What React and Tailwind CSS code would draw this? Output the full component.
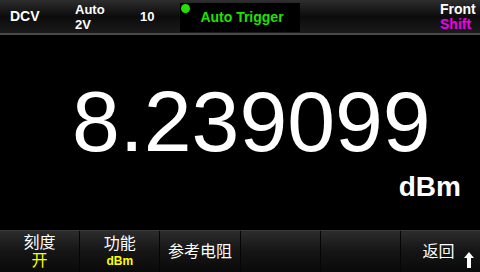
import React from "react";

const font = { fontFamily: '"Liberation Sans", Arial, "Noto Sans CJK SC", sans-serif' };

function SoftKey({ top, bottom, children, last }) {
  return (
    <div
      className={`relative flex-1 flex flex-col items-center justify-center bg-gradient-to-b from-[#2c2c2c] via-[#151515] to-[#0a0a0a] ${
        last ? "" : "border-r border-[#050505]"
      }`}
    >
      {top && <div className="text-white text-[16px] leading-[18px]">{top}</div>}
      {bottom}
      {children}
    </div>
  );
}

export default function App() {
  return (
    <div className="w-[480px] h-[272px] bg-black flex flex-col overflow-hidden" style={font}>
      {/* status bar */}
      <div className="h-[35px] flex items-stretch bg-gradient-to-b from-[#2e2e2e] via-[#0c0c0c] to-[#1a1a1a] border-b-2 border-[#4a4a4a]">
        <div className="w-[70px] flex items-center pl-[10px] text-white font-bold text-[14px]">DCV</div>
        <div className="w-[66px] flex flex-col justify-center pl-[5px] text-white font-bold text-[13px] leading-[15px]">
          <span>Auto</span>
          <span>2V</span>
        </div>
        <div className="w-[44px] flex items-center pl-[4px] text-white font-bold text-[13px]">10</div>
        <div className="relative w-[120px] my-[3px] mb-[1px] bg-black flex items-center justify-center">
          <span className="absolute left-[1px] top-[1px] w-[9px] h-[9px] rounded-full bg-[#22e000]" />
          <span className="text-[#22e000] font-bold text-[14px] pl-[4px]">Auto Trigger</span>
        </div>
        <div className="flex-1" />
        <div className="w-[40px] flex flex-col justify-center items-start text-[14px] font-bold leading-[15px]">
          <span className="text-white">Front</span>
          <span className="text-[#f000f0]">Shift</span>
        </div>
      </div>

      {/* main reading */}
      <div className="flex-1 relative flex flex-col">
        <div className="pt-[43px] pl-[72px] text-white text-[86px] leading-[86px]">8.239099</div>
        <div className="self-end mr-[19px] mt-[8px] text-white font-bold text-[28px] leading-[30px]">dBm</div>
      </div>

      {/* soft keys */}
      <div className="h-[42px] flex border-t border-[#3a3a3a]">
        <SoftKey top="刻度" bottom={<div className="text-[#ffff00] text-[16px] leading-[17px]">开</div>} />
        <SoftKey top="功能" bottom={<div className="text-[#ffff00] font-bold text-[12px] leading-[16px]">dBm</div>} />
        <SoftKey top="参考电阻" />
        <SoftKey />
        <SoftKey />
        <SoftKey last>
          <div className="text-white text-[16px] leading-[18px] pr-[4px]">返回</div>
          <svg className="absolute right-[6px] bottom-[4px]" width="10" height="16" viewBox="0 0 10 16">
            <path d="M5 0 L10 6 L7 6 L7 16 L3 16 L3 6 L0 6 Z" fill="white" />
          </svg>
        </SoftKey>
      </div>
    </div>
  );
}
